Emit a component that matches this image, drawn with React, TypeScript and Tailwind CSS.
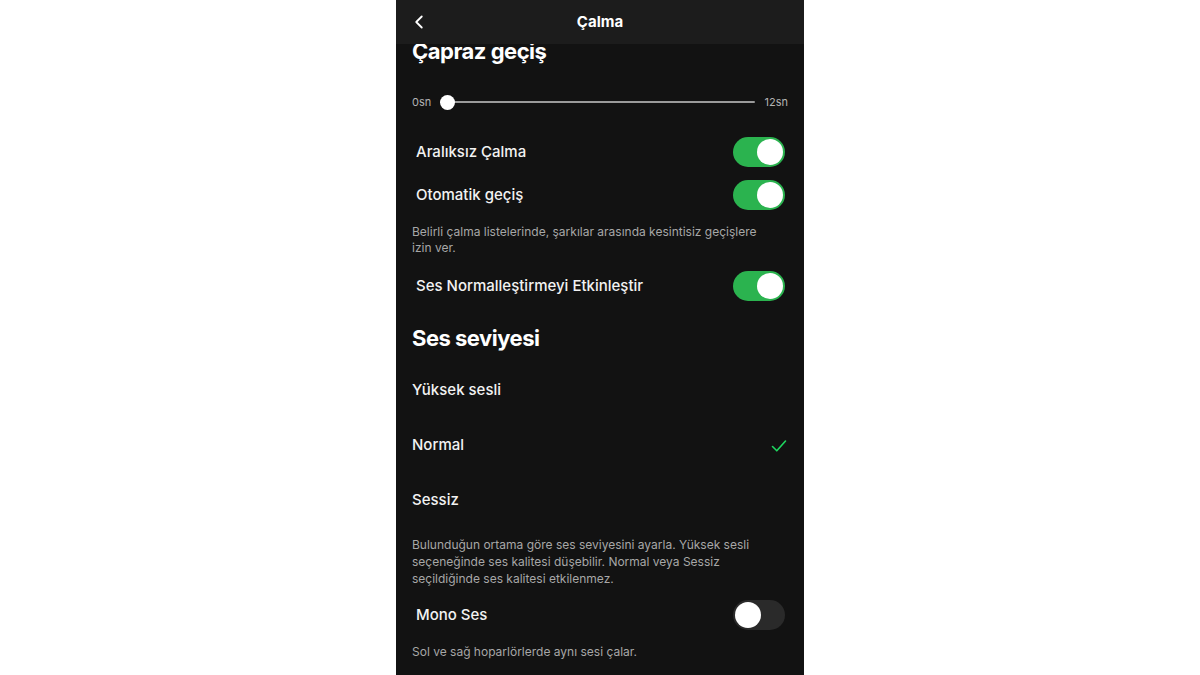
import { ChevronLeft } from "lucide-react";

type ToggleProps = { on?: boolean };

function Toggle({ on = false }: ToggleProps) {
	return (
		<div
			className={`flex h-[30px] w-[52px] shrink-0 items-center rounded-full px-[2px] ${
				on ? "justify-end bg-[#2bb34f]" : "justify-start bg-[#2a2a2a]"
			}`}
		>
			<div className="h-[26px] w-[26px] rounded-full bg-white" />
		</div>
	);
}

function ToggleRow({ label, on, className = "" }: { label: string; on?: boolean; className?: string }) {
	return (
		<div className={`flex h-[30px] items-center justify-between pl-[20px] pr-[19px] ${className}`}>
			<span className="text-[15px] font-medium text-[#f2f2f2]">{label}</span>
			<Toggle on={on} />
		</div>
	);
}

function Check() {
	return (
		<svg width="16" height="14" viewBox="0 0 16 14" fill="none">
			<path d="M1.5 7.5 L5.8 11.8 L14.5 2" stroke="#1ed760" strokeWidth="1.6" strokeLinecap="round" strokeLinejoin="round" />
		</svg>
	);
}

const levels = [
	{ name: "Yüksek sesli", selected: false },
	{ name: "Normal", selected: true },
	{ name: "Sessiz", selected: false },
];

export default function App() {
	return (
		<div
			className="flex h-[675px] w-full justify-center bg-white"
			style={{ fontFamily: "Inter, 'Noto Sans', sans-serif" }}
		>
			<div className="flex h-full w-[408px] flex-col overflow-hidden bg-[#121212]">
				{/* top bar */}
				<div className="relative z-10 flex h-[44px] shrink-0 items-center justify-center bg-[#1c1c1c]">
					<ChevronLeft className="absolute left-[12px] top-[11px] text-white" size={22} strokeWidth={2} />
					<span className="text-[15px] font-bold text-white">Çalma</span>
				</div>

				<div className="-mt-[5px] flex h-[24px] items-center pl-[16px]">
					<h2 className="text-[22px] font-bold tracking-[-0.5px] text-white">Çapraz geçiş</h2>
				</div>

				{/* crossfade slider */}
				<div className="mt-[27px] flex h-[24px] items-center pl-[16px] pr-[16px]">
					<span className="w-[24px] text-[11px] text-[#b3b3b3]">0sn</span>
					<div className="relative ml-[4px] flex h-[15px] flex-1 items-center">
						<div className="h-[2px] w-full rounded-full bg-[#9a9a9a]" />
						<div className="absolute left-0 top-0 h-[15px] w-[15px] rounded-full bg-white" />
					</div>
					<span className="ml-[10px] text-[11px] text-[#b3b3b3]">12sn</span>
				</div>

				<ToggleRow label="Aralıksız Çalma" on className="mt-[23px]" />
				<ToggleRow label="Otomatik geçiş" on className="mt-[13px]" />

				<p className="mt-[14px] pl-[16px] pr-[30px] text-[12px] leading-[16px] text-[#a7a7a7]">
					Belirli çalma listelerinde, şarkılar arasında kesintisiz geçişlere izin ver.
				</p>

				<ToggleRow label="Ses Normalleştirmeyi Etkinleştir" on className="mt-[15px]" />

				<div className="mt-[22px] flex h-[30px] items-center pl-[16px]">
					<h2 className="text-[22px] font-bold tracking-[-0.5px] text-white">Ses seviyesi</h2>
				</div>

				<div className="mt-[10px] flex flex-col">
					{levels.map((level) => (
						<div key={level.name} className="flex h-[55px] items-center justify-between pl-[16px] pr-[17px]">
							<span className="text-[15px] font-medium text-[#f2f2f2]">{level.name}</span>
							{level.selected && <Check />}
						</div>
					))}
				</div>

				<p className="mt-[8px] pl-[16px] pr-[40px] text-[12px] leading-[17px] text-[#a7a7a7]">
					Bulunduğun ortama göre ses seviyesini ayarla. Yüksek sesli seçeneğinde ses kalitesi düşebilir. Normal veya
					Sessiz seçildiğinde ses kalitesi etkilenmez.
				</p>

				<ToggleRow label="Mono Ses" className="mt-[13px]" />

				<p className="mt-[14px] pl-[16px] text-[12px] leading-[16px] text-[#a7a7a7]">
					Sol ve sağ hoparlörlerde aynı sesi çalar.
				</p>
			</div>
		</div>
	);
}
